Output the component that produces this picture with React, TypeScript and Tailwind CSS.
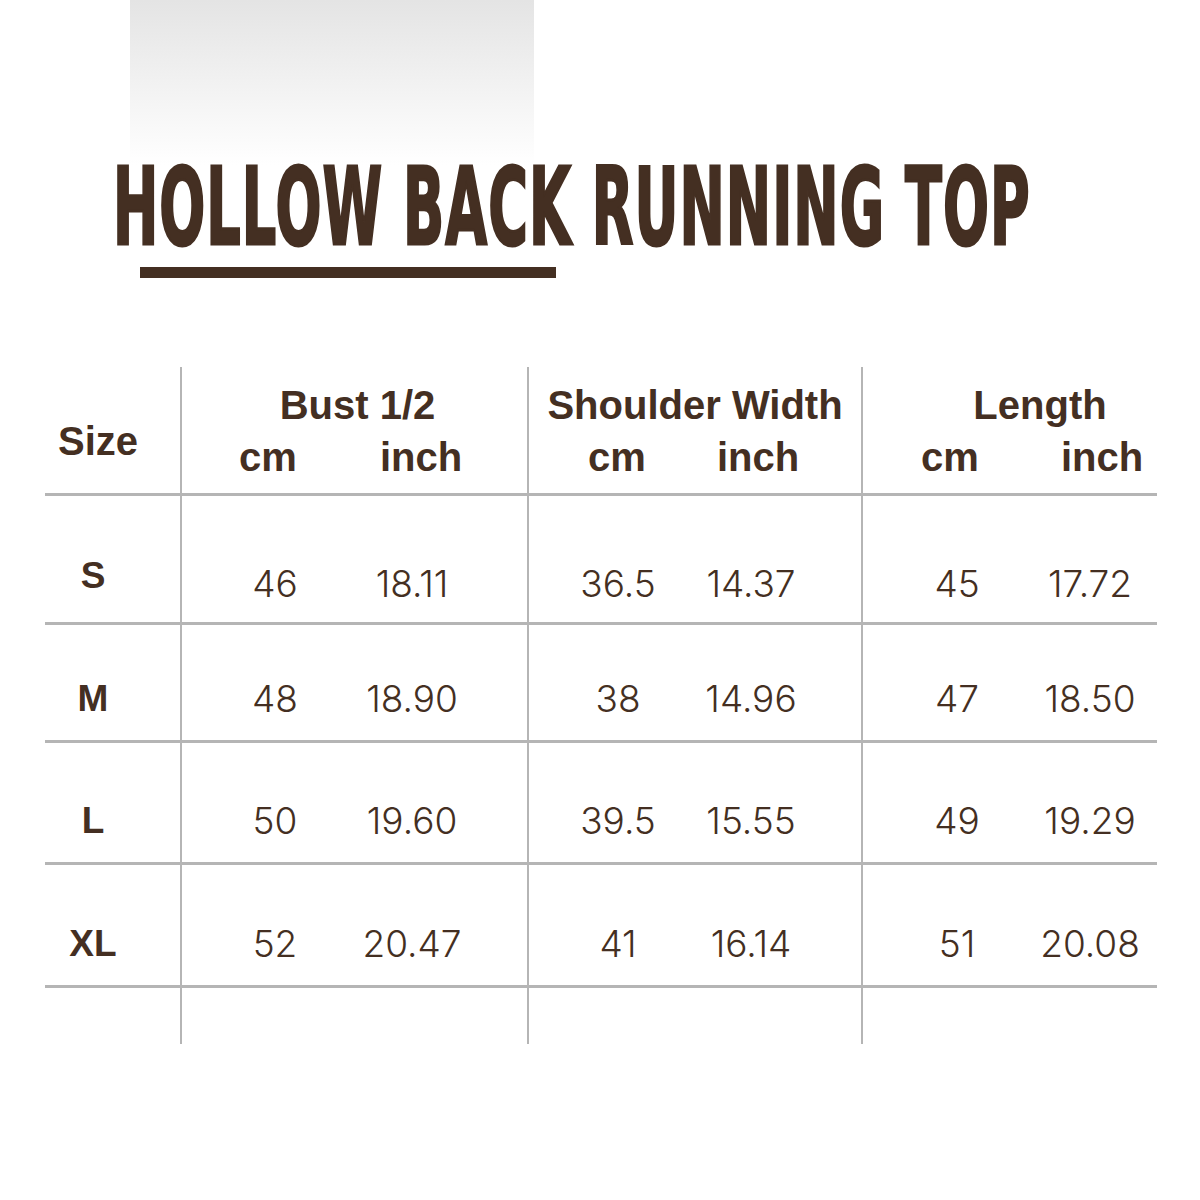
import React from "react";

const brown = "text-[#442f22]";

type Row = {
  size: string;
  vals: [string, string, string, string, string, string];
  h: string;
  pt: string;
  sizeShift?: string;
};

const rows: Row[] = [
  { size: "S", vals: ["46", "18.11", "36.5", "14.37", "45", "17.72"], h: "h-[129px]", pt: "pt-[68px]", sizeShift: "-mt-[8px]" },
  { size: "M", vals: ["48", "18.90", "38", "14.96", "47", "18.50"], h: "h-[118px]", pt: "pt-[54px]" },
  { size: "L", vals: ["50", "19.60", "39.5", "15.55", "49", "19.29"], h: "h-[122px]", pt: "pt-[58px]" },
  { size: "XL", vals: ["52", "20.47", "41", "16.14", "51", "20.08"], h: "h-[123px]", pt: "pt-[59px]" },
];

function Cell({ ml, children }: { ml: string; children?: React.ReactNode }) {
  return <div className={`${ml} w-[110px] shrink-0 text-center whitespace-nowrap`}>{children}</div>;
}

export default function App() {
  return (
    <div className="w-[1200px] h-[1200px] bg-white overflow-hidden font-['Liberation_Sans',Arial,sans-serif]">
      {/* soft grey panel behind the heading */}
      <div className="ml-[130px] w-[404px] h-[165px] bg-gradient-to-b from-[#e4e4e4] to-white" />

      <div className="-mt-[13px] ml-[113px] h-[110px] whitespace-nowrap">
        <span
          className={`inline-block origin-left scale-x-[0.506] text-[107px] leading-[110px] font-bold tracking-[2px] ${brown} font-['DejaVu_Sans',sans-serif] [-webkit-text-stroke:3px_#442f22]`}
        >
          HOLLOW BACK RUNNING TOP
        </span>
      </div>
      <div className="mt-[5px] ml-[140px] w-[416px] h-[11px] bg-[#442f22]" />

      {/* size table */}
      <div className={`mt-[89px] ml-[45px] w-[1112px] ${brown}`}>
        {/* header */}
        <div className="flex h-[129px] border-b-[3px] border-[#b5b5b5] text-[40px] leading-[48px] font-bold">
          <div className="w-[135px] shrink-0 pt-[50px] pl-[13px]">Size</div>
          <div className="w-[347px] shrink-0 border-l-2 border-[#b5b5b5] pt-[14px]">
            <div className="text-center pl-[6px]">Bust 1/2</div>
            <div className="flex mt-[4px]">
              <Cell ml="ml-[31px]">cm</Cell>
              <Cell ml="ml-[43px]">inch</Cell>
            </div>
          </div>
          <div className="w-[334px] shrink-0 border-l-2 border-[#b5b5b5] pt-[14px]">
            <div className="text-center">Shoulder Width</div>
            <div className="flex mt-[4px]">
              <Cell ml="ml-[33px]">cm</Cell>
              <Cell ml="ml-[31px]">inch</Cell>
            </div>
          </div>
          <div className="flex-1 border-l-2 border-[#b5b5b5] pt-[14px]">
            <div className="text-center pl-[60px]">Length</div>
            <div className="flex mt-[4px]">
              <Cell ml="ml-[32px]">cm</Cell>
              <Cell ml="ml-[42px]">inch</Cell>
            </div>
          </div>
        </div>

        {rows.map((r) => (
          <div key={r.size} className={`flex ${r.h} border-b-[3px] border-[#b5b5b5] text-[37px] leading-[40px]`}>
            <div className={`w-[135px] shrink-0 ${r.pt} font-bold`}>
              <div className="w-[96px] text-center">
                <div className={r.sizeShift}>{r.size}</div>
              </div>
            </div>
            <div className={`w-[347px] shrink-0 border-l-2 border-[#b5b5b5] ${r.pt} flex font-['Inter',sans-serif] font-light`}>
              <Cell ml="ml-[38px]">{r.vals[0]}</Cell>
              <Cell ml="ml-[27px]">{r.vals[1]}</Cell>
            </div>
            <div className={`w-[334px] shrink-0 border-l-2 border-[#b5b5b5] ${r.pt} flex font-['Inter',sans-serif] font-light`}>
              <Cell ml="ml-[34px]">{r.vals[2]}</Cell>
              <Cell ml="ml-[23px]">{r.vals[3]}</Cell>
            </div>
            <div className={`flex-1 border-l-2 border-[#b5b5b5] ${r.pt} flex font-['Inter',sans-serif] font-light`}>
              <Cell ml="ml-[39px]">{r.vals[4]}</Cell>
              <Cell ml="ml-[23px]">{r.vals[5]}</Cell>
            </div>
          </div>
        ))}

        {/* trailing stubs of the column rules */}
        <div className="flex h-[56px]">
          <div className="w-[135px] shrink-0" />
          <div className="w-[347px] shrink-0 border-l-2 border-[#b5b5b5]" />
          <div className="w-[334px] shrink-0 border-l-2 border-[#b5b5b5]" />
          <div className="flex-1 border-l-2 border-[#b5b5b5]" />
        </div>
      </div>
    </div>
  );
}
